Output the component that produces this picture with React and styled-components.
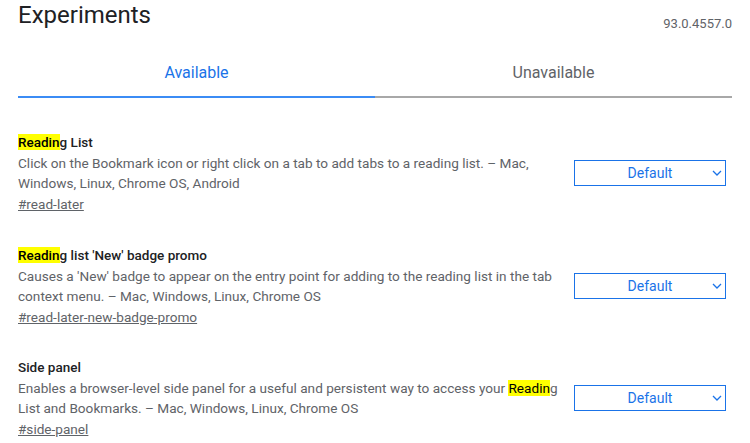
import React from 'react';
import styled, { createGlobalStyle } from 'styled-components';

const GlobalStyle = createGlobalStyle`
  body {
    margin: 0;
    background: #fff;
    font-family: Roboto, "Liberation Sans", sans-serif;
  }
`;

const Page = styled.div`
  padding: 0 18px;
  width: 714px;
`;

const Header = styled.div`
  display: flex;
  justify-content: space-between;
  align-items: flex-start;
  height: 46px;
`;

const Title = styled.h1`
  margin: 0;
  font-size: 24px;
  font-weight: 400;
  line-height: 30px;
  color: #202124;
`;

const Version = styled.div`
  font-size: 13px;
  color: #5f6368;
  margin-top: 16px;
`;

const Tabs = styled.div`
  display: flex;
`;

const Tab = styled.div`
  flex: 1;
  text-align: center;
  font-size: 16px;
  line-height: 20px;
  padding: 17px 0 13px;
  color: ${(p) => (p.active ? '#1a73e8' : '#5f6368')};
  border-bottom: 2px solid ${(p) => (p.active ? '#3b8cf5' : '#a8a8a8')};
`;

const List = styled.div`
  padding-top: 34px;
`;

const Item = styled.div`
  display: flex;
  align-items: center;
  margin-bottom: 30.5px;
`;

const Info = styled.div`
  width: 540px;
  margin-right: 16px;
`;

const ItemTitle = styled.div`
  font-size: 13.5px;
  font-weight: 500;
  line-height: 20px;
  margin-bottom: 1px;
  color: #202124;
`;

const Mark = styled.mark`
  background: #ffff00;
  color: #000;
`;

const Desc = styled.div`
  font-size: 13.6px;
  line-height: 20px;
  color: #5f6368;
`;

const Link = styled.a`
  display: inline-block;
  margin-top: 1px;
  font-size: 13.6px;
  line-height: 20px;
  color: #5f6368;
  text-decoration: underline;
`;

const Select = styled.div`
  position: relative;
  box-sizing: border-box;
  width: 152px;
  height: 26px;
  border: 1px solid #1a73e8;
  display: flex;
  align-items: center;
  justify-content: center;
  font-size: 14px;
  color: #1a73e8;
`;

const Chevron = styled.svg`
  position: absolute;
  right: 3px;
  top: 8px;
`;

const hl = (text) => {
  const i = text.indexOf('Readin');
  if (i < 0) return text;
  return (
    <>
      {text.slice(0, i)}
      <Mark>Readin</Mark>
      {text.slice(i + 6)}
    </>
  );
};

const experiments = [
  {
    name: 'Reading List',
    desc: 'Click on the Bookmark icon or right click on a tab to add tabs to a reading list. – Mac, Windows, Linux, Chrome OS, Android',
    tag: '#read-later',
  },
  {
    name: "Reading list 'New' badge promo",
    desc: "Causes a 'New' badge to appear on the entry point for adding to the reading list in the tab context menu. – Mac, Windows, Linux, Chrome OS",
    tag: '#read-later-new-badge-promo',
  },
  {
    name: 'Side panel',
    desc: 'Enables a browser-level side panel for a useful and persistent way to access your Reading List and Bookmarks. – Mac, Windows, Linux, Chrome OS',
    tag: '#side-panel',
  },
];

const App = () => (
  <Page>
    <GlobalStyle />
    <Header>
      <Title>Experiments</Title>
      <Version>93.0.4557.0</Version>
    </Header>
    <Tabs>
      <Tab active>Available</Tab>
      <Tab>Unavailable</Tab>
    </Tabs>
    <List>
      {experiments.map((e) => (
        <Item key={e.tag}>
          <Info>
            <ItemTitle>{hl(e.name)}</ItemTitle>
            <Desc>{hl(e.desc)}</Desc>
            <Link>{e.tag}</Link>
          </Info>
          <Select>
            Default
            <Chevron width="10" height="8" viewBox="0 0 10 8">
              <path d="M1 2l4 4 4-4" fill="none" stroke="#1a73e8" strokeWidth="1.3" />
            </Chevron>
          </Select>
        </Item>
      ))}
    </List>
  </Page>
);

export default App;
